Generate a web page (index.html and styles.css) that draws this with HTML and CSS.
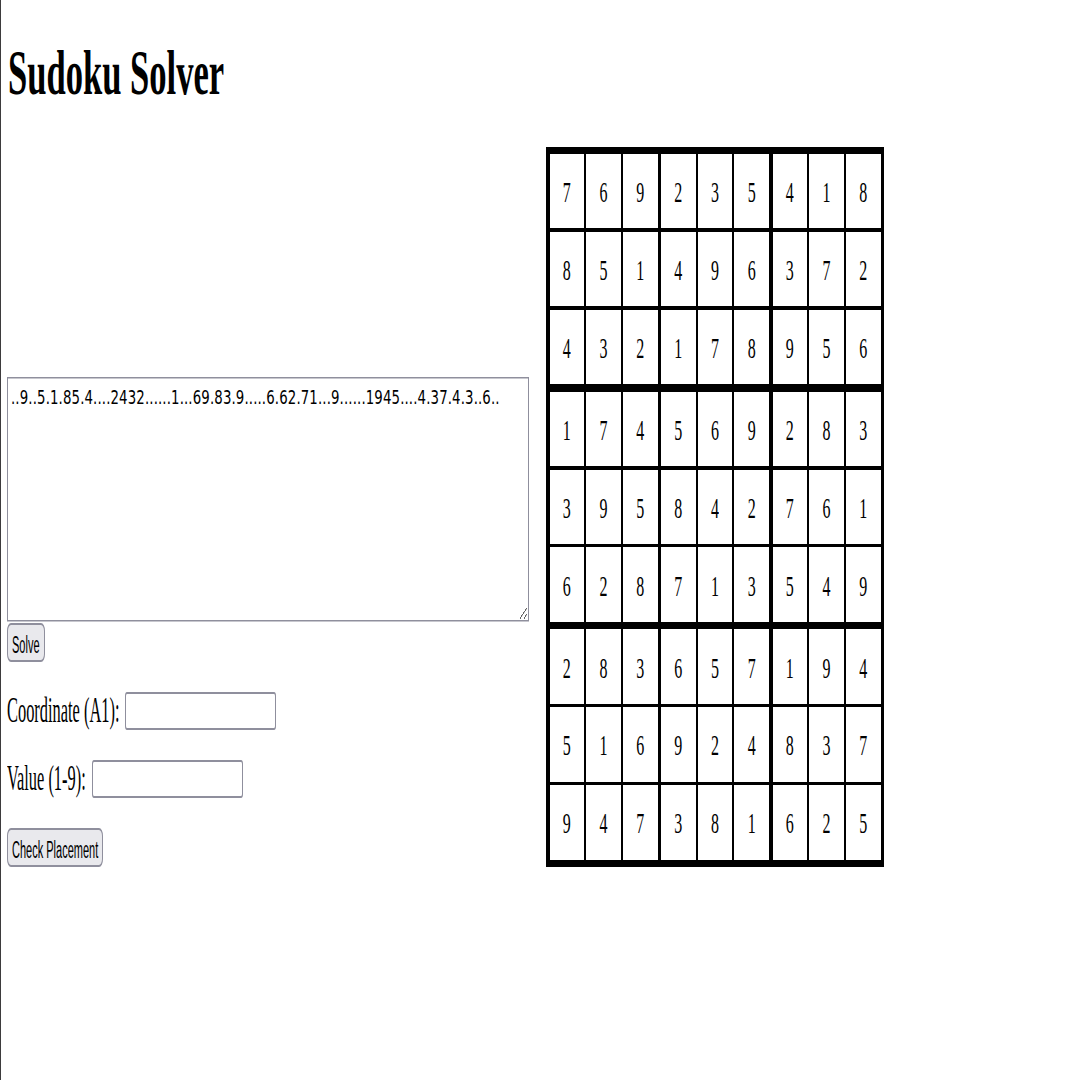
FILE: index.html
```html
<!DOCTYPE html>
<html lang="en">
<head>
<meta charset="utf-8">
<title>Sudoku Solver</title>
<link rel="stylesheet" href="styles.css">
</head>
<body>
<h1 class="title"><span class="title-text">Sudoku Solver</span></h1>
<main class="layout">
  <form class="controls">
    <div class="puzzle-wrap"><textarea class="puzzle" spellcheck="false">..9..5.1.85.4....2432......1...69.83.9.....6.62.71...9......1945....4.37.4.3..6..</textarea></div>
    <button type="button" class="btn btn-solve"><span class="btn-text">Solve</span></button>
    <div class="field"><label class="label" for="coord"><span class="label-text">Coordinate (A1):</span></label><input class="text-input" id="coord" type="text"></div>
    <div class="field"><label class="label" for="val"><span class="label-text">Value (1-9):</span></label><input class="text-input" id="val" type="text"></div>
    <button type="button" class="btn btn-check"><span class="btn-text">Check Placement</span></button>
  </form>
  <div class="board">
    <div class="box"><div class="cell"><span>7</span></div><div class="cell"><span>6</span></div><div class="cell"><span>9</span></div><div class="cell"><span>8</span></div><div class="cell"><span>5</span></div><div class="cell"><span>1</span></div><div class="cell"><span>4</span></div><div class="cell"><span>3</span></div><div class="cell"><span>2</span></div></div>
    <div class="box"><div class="cell"><span>2</span></div><div class="cell"><span>3</span></div><div class="cell"><span>5</span></div><div class="cell"><span>4</span></div><div class="cell"><span>9</span></div><div class="cell"><span>6</span></div><div class="cell"><span>1</span></div><div class="cell"><span>7</span></div><div class="cell"><span>8</span></div></div>
    <div class="box"><div class="cell"><span>4</span></div><div class="cell"><span>1</span></div><div class="cell"><span>8</span></div><div class="cell"><span>3</span></div><div class="cell"><span>7</span></div><div class="cell"><span>2</span></div><div class="cell"><span>9</span></div><div class="cell"><span>5</span></div><div class="cell"><span>6</span></div></div>
    <div class="box"><div class="cell"><span>1</span></div><div class="cell"><span>7</span></div><div class="cell"><span>4</span></div><div class="cell"><span>3</span></div><div class="cell"><span>9</span></div><div class="cell"><span>5</span></div><div class="cell"><span>6</span></div><div class="cell"><span>2</span></div><div class="cell"><span>8</span></div></div>
    <div class="box"><div class="cell"><span>5</span></div><div class="cell"><span>6</span></div><div class="cell"><span>9</span></div><div class="cell"><span>8</span></div><div class="cell"><span>4</span></div><div class="cell"><span>2</span></div><div class="cell"><span>7</span></div><div class="cell"><span>1</span></div><div class="cell"><span>3</span></div></div>
    <div class="box"><div class="cell"><span>2</span></div><div class="cell"><span>8</span></div><div class="cell"><span>3</span></div><div class="cell"><span>7</span></div><div class="cell"><span>6</span></div><div class="cell"><span>1</span></div><div class="cell"><span>5</span></div><div class="cell"><span>4</span></div><div class="cell"><span>9</span></div></div>
    <div class="box"><div class="cell"><span>2</span></div><div class="cell"><span>8</span></div><div class="cell"><span>3</span></div><div class="cell"><span>5</span></div><div class="cell"><span>1</span></div><div class="cell"><span>6</span></div><div class="cell"><span>9</span></div><div class="cell"><span>4</span></div><div class="cell"><span>7</span></div></div>
    <div class="box"><div class="cell"><span>6</span></div><div class="cell"><span>5</span></div><div class="cell"><span>7</span></div><div class="cell"><span>9</span></div><div class="cell"><span>2</span></div><div class="cell"><span>4</span></div><div class="cell"><span>3</span></div><div class="cell"><span>8</span></div><div class="cell"><span>1</span></div></div>
    <div class="box"><div class="cell"><span>1</span></div><div class="cell"><span>9</span></div><div class="cell"><span>4</span></div><div class="cell"><span>8</span></div><div class="cell"><span>3</span></div><div class="cell"><span>7</span></div><div class="cell"><span>6</span></div><div class="cell"><span>2</span></div><div class="cell"><span>5</span></div></div>
  </div>
</main>
</body>
</html>
```
FILE: styles.css
```css
html {
  background: #fff;
}

body {
  margin: 0;
  padding: 0 0 0 6px;
  border-left: 1px solid #3d3b3d;
  min-height: 1080px;
  box-sizing: border-box;
  font-family: "Liberation Serif", "Times New Roman", serif;
  color: #000;
}

.title {
  margin: 0;
  padding: 41px 0 0 1px;
  height: 32px;
  font-size: 32px;
  line-height: 32px;
  font-weight: bold;
}

.title-text {
  display: inline-block;
  transform: scale(1.08, 1.96);
  transform-origin: 0 0;
}

.layout {
  display: flex;
  align-items: flex-end;
  gap: 17px;
  margin-top: 74px;
}

.controls {
  margin: 0;
  width: 522px;
  display: flex;
  flex-direction: column;
  align-items: flex-start;
}

.puzzle-wrap {
  width: 522px;
  height: 244px;
}

.puzzle {
  display: block;
  box-sizing: border-box;
  width: 522px;
  height: 162.67px;
  margin: 0;
  padding: 5px 3px 2px;
  border: 1px solid #8f8f9d;
  font-family: "DejaVu Sans", sans-serif;
  font-size: 13.33px;
  letter-spacing: 0.12px;
  line-height: normal;
  color: #000;
  background: #fff;
  transform: scaleY(1.5);
  transform-origin: 0 0;
}

.btn {
  box-sizing: border-box;
  height: 39px;
  margin: 2px 0 0;
  padding: 4px 4px 0;
  border: 1px solid #8f8f9d;
  border-width: 2px 1px;
  border-radius: 4px / 8px;
  background: #e9e9ed;
  font-family: "Liberation Sans", Arial, sans-serif;
  font-size: 11px;
  color: #000;
  display: flex;
  align-items: center;
}

.btn-text {
  display: inline-block;
  transform: scaleY(2.15);
}

.btn-check {
  margin-top: 30px;
}

.field {
  display: flex;
  align-items: center;
  gap: 6px;
  margin-top: 30px;
}

.label-text {
  display: inline-block;
  font-size: 16.4px;
  transform: scaleY(2.15);
}

.text-input {
  box-sizing: border-box;
  width: 151px;
  height: 38px;
  margin: 0;
  padding: 0;
  border: 1px solid #8f8f9d;
  border-width: 2px 1px;
  border-radius: 2px / 4px;
  background: #fff;
}

.board {
  flex: none;
  box-sizing: border-box;
  width: 338px;
  height: 719.6px;
  padding: 7px 3.5px;
  background: #000;
  display: grid;
  grid-template-columns: repeat(3, 1fr);
  grid-template-rows: repeat(3, 1fr);
  column-gap: 3.5px;
  row-gap: 7.5px;
}

.box {
  display: grid;
  grid-template-columns: repeat(3, 1fr);
  grid-template-rows: repeat(3, 1fr);
  column-gap: 2px;
  row-gap: 3.5px;
}

.cell {
  background: #fff;
  display: flex;
  align-items: center;
  justify-content: center;
  padding-top: 4px;
  font-size: 16px;
}

.cell span {
  display: inline-block;
  transform: scaleY(1.85);
}
```
